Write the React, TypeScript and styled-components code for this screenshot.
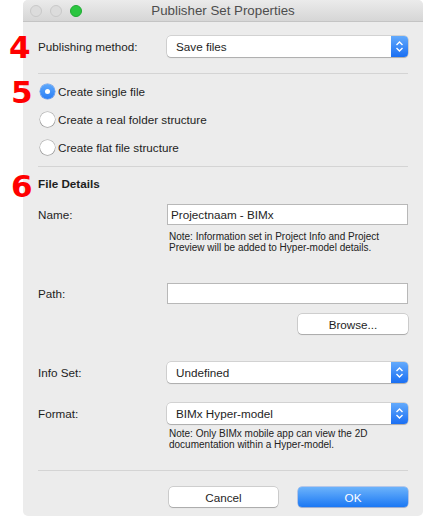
import React from "react";
import styled, { createGlobalStyle } from "styled-components";

const Global = createGlobalStyle`
  html, body { margin: 0; padding: 0; background: #ffffff; }
  body { font-family: "Liberation Sans", Arial, sans-serif; -webkit-font-smoothing: antialiased; }
  * { box-sizing: border-box; }
`;

const Page = styled.div`
  position: relative;
  width: 423px;
  height: 522px;
  overflow: hidden;
  padding-left: 23px;
`;

const Window = styled.div`
  width: 400px;
  height: 516px;
  background: #ececec;
  border-radius: 5px;
  display: flex;
  flex-direction: column;
  overflow: hidden;
`;

const TitleBar = styled.div`
  height: 22px;
  flex: none;
  background: linear-gradient(#ebebeb, #d6d6d6);
  border-bottom: 1px solid #c4c4c4;
  display: flex;
  align-items: center;
  position: relative;
  padding-left: 7px;
`;

const Lights = styled.div`
  display: flex;
  gap: 8px;
`;

const Light = styled.span<{ $color: string; $border: string }>`
  width: 12px;
  height: 12px;
  border-radius: 50%;
  background: ${(p) => p.$color};
  border: 1px solid ${(p) => p.$border};
`;

const Title = styled.div`
  position: absolute;
  left: 0;
  right: 0;
  text-align: center;
  font-size: 13.3px;
  color: #4d4d4d;
  pointer-events: none;
`;

const Content = styled.div`
  padding: 0 15px;
  display: flex;
  flex-direction: column;
`;

const Row = styled.div<{ $mt: number }>`
  margin-top: ${(p) => p.$mt}px;
  display: grid;
  grid-template-columns: 129px 241px;
  align-items: center;
`;

const Label = styled.div`
  font-size: 11.7px;
  color: #1e1e1e;
`;

const Select = styled.div`
  height: 21px;
  background: #fff;
  border-radius: 4px;
  box-shadow: 0 0 0 0.5px rgba(0, 0, 0, 0.22), 0 1px 1px rgba(0, 0, 0, 0.18);
  display: flex;
  align-items: center;
  justify-content: space-between;
  overflow: hidden;
  font-size: 11.7px;
  color: #1e1e1e;
  padding-left: 9px;
`;

const Stepper = styled.div`
  width: 17px;
  height: 100%;
  background: linear-gradient(#63aafc, #1a6ff3);
  display: flex;
  align-items: center;
  justify-content: center;
`;

const TextInput = styled.div`
  height: 21px;
  background: #fff;
  border: 1px solid #b8b8b8;
  font-size: 11.7px;
  color: #1e1e1e;
  display: flex;
  align-items: center;
  padding-left: 3px;
`;

const Separator = styled.div<{ $mt: number }>`
  margin-top: ${(p) => p.$mt}px;
  height: 1px;
  background: #d4d4d4;
`;

const RadioGroup = styled.div`
  margin-top: 3px;
  display: flex;
  flex-direction: column;
`;

const RadioRow = styled.div`
  height: 28px;
  display: flex;
  align-items: center;
  padding-left: 2px;
  gap: 3px;
  font-size: 11.7px;
  color: #1e1e1e;
`;

const RadioCircle = styled.span<{ $on?: boolean }>`
  width: 15px;
  height: 15px;
  border-radius: 50%;
  display: flex;
  align-items: center;
  justify-content: center;
  background: ${(p) => (p.$on ? "linear-gradient(#5fa9fb, #2a7ef6)" : "#fff")};
  box-shadow: ${(p) =>
    p.$on
      ? "0 0 0 0.5px rgba(20,90,220,0.6)"
      : "0 0 0 0.5px rgba(0,0,0,0.3), 0 0.5px 1px rgba(0,0,0,0.2)"};
  &::after {
    content: "";
    display: ${(p) => (p.$on ? "block" : "none")};
    width: 5px;
    height: 5px;
    border-radius: 50%;
    background: #fff;
  }
`;

const SectionTitle = styled.div`
  margin-top: 9px;
  line-height: 16px;
  font-size: 11.7px;
  font-weight: bold;
  color: #1e1e1e;
`;

const Note = styled.div<{ $mt: number }>`
  margin-top: ${(p) => p.$mt}px;
  margin-left: 131px;
  font-size: 10px;
  line-height: 11px;
  color: #222;
`;

const ButtonRow = styled.div<{ $mt: number }>`
  margin-top: ${(p) => p.$mt}px;
  display: flex;
  justify-content: flex-end;
  gap: 20px;
`;

const Button = styled.div<{ $primary?: boolean; $w: number }>`
  width: ${(p) => p.$w}px;
  height: 20px;
  border-radius: 4px;
  display: flex;
  align-items: center;
  justify-content: center;
  font-size: 11.7px;
  color: ${(p) => (p.$primary ? "#fff" : "#1e1e1e")};
  background: ${(p) => (p.$primary ? "linear-gradient(#6cb3fb, #1b78f4)" : "#fff")};
  box-shadow: ${(p) =>
    p.$primary
      ? "0 0 0 0.5px rgba(20,90,220,0.5), 0 1px 1px rgba(0,0,0,0.15)"
      : "0 0 0 0.5px rgba(0,0,0,0.25), 0 1px 1px rgba(0,0,0,0.18)"};
`;

const Marker = styled.div<{ $x: number; $y: number }>`
  position: absolute;
  left: ${(p) => p.$x}px;
  top: ${(p) => p.$y}px;
  font-family: "DejaVu Sans", "Liberation Sans", sans-serif;
  font-weight: bold;
  font-size: 31px;
  line-height: 30px;
  color: #ff0000;
`;

const Chevrons = () => (
  <svg width="9" height="13" viewBox="0 0 9 13">
    <path d="M1.5 5 L4.5 2 L7.5 5" fill="none" stroke="#fff" strokeWidth="1.4" />
    <path d="M1.5 8 L4.5 11 L7.5 8" fill="none" stroke="#fff" strokeWidth="1.4" />
  </svg>
);

const Popup = ({ value }: { value: string }) => (
  <Select>
    <span>{value}</span>
    <Stepper>
      <Chevrons />
    </Stepper>
  </Select>
);

export default function App() {
  return (
    <>
      <Global />
      <Page>
        <Window>
          <TitleBar>
            <Lights>
              <Light $color="#dcdcdc" $border="#c8c8c8" />
              <Light $color="#dcdcdc" $border="#c8c8c8" />
              <Light $color="#2bc640" $border="#1faa32" />
            </Lights>
            <Title>Publisher Set Properties</Title>
          </TitleBar>
          <Content>
            <Row $mt={14}>
              <Label>Publishing method:</Label>
              <Popup value="Save files" />
            </Row>
            <Separator $mt={16} />
            <RadioGroup>
              <RadioRow>
                <RadioCircle $on />
                Create single file
              </RadioRow>
              <RadioRow>
                <RadioCircle />
                Create a real folder structure
              </RadioRow>
              <RadioRow>
                <RadioCircle />
                Create flat file structure
              </RadioRow>
            </RadioGroup>
            <Separator $mt={5} />
            <SectionTitle>File Details</SectionTitle>
            <Row $mt={12}>
              <Label>Name:</Label>
              <TextInput>Projectnaam - BIMx</TextInput>
            </Row>
            <Note $mt={6}>
              Note: Information set in Project Info and Project
              <br />
              Preview will be added to Hyper-model details.
            </Note>
            <Row $mt={30}>
              <Label>Path:</Label>
              <TextInput />
            </Row>
            <ButtonRow $mt={10}>
              <Button $w={110}>Browse...</Button>
            </ButtonRow>
            <Row $mt={28}>
              <Label>Info Set:</Label>
              <Popup value="Undefined" />
            </Row>
            <Row $mt={20}>
              <Label>Format:</Label>
              <Popup value="BIMx Hyper-model" />
            </Row>
            <Note $mt={4}>
              Note: Only BIMx mobile app can view the 2D
              <br />
              documentation within a Hyper-model.
            </Note>
            <Separator $mt={20} />
            <ButtonRow $mt={16}>
              <Button $w={109}>Cancel</Button>
              <Button $w={110} $primary>
                OK
              </Button>
            </ButtonRow>
          </Content>
        </Window>
        <Marker $x={9} $y={32}>4</Marker>
        <Marker $x={11} $y={77}>5</Marker>
        <Marker $x={11} $y={171}>6</Marker>
      </Page>
    </>
  );
}
